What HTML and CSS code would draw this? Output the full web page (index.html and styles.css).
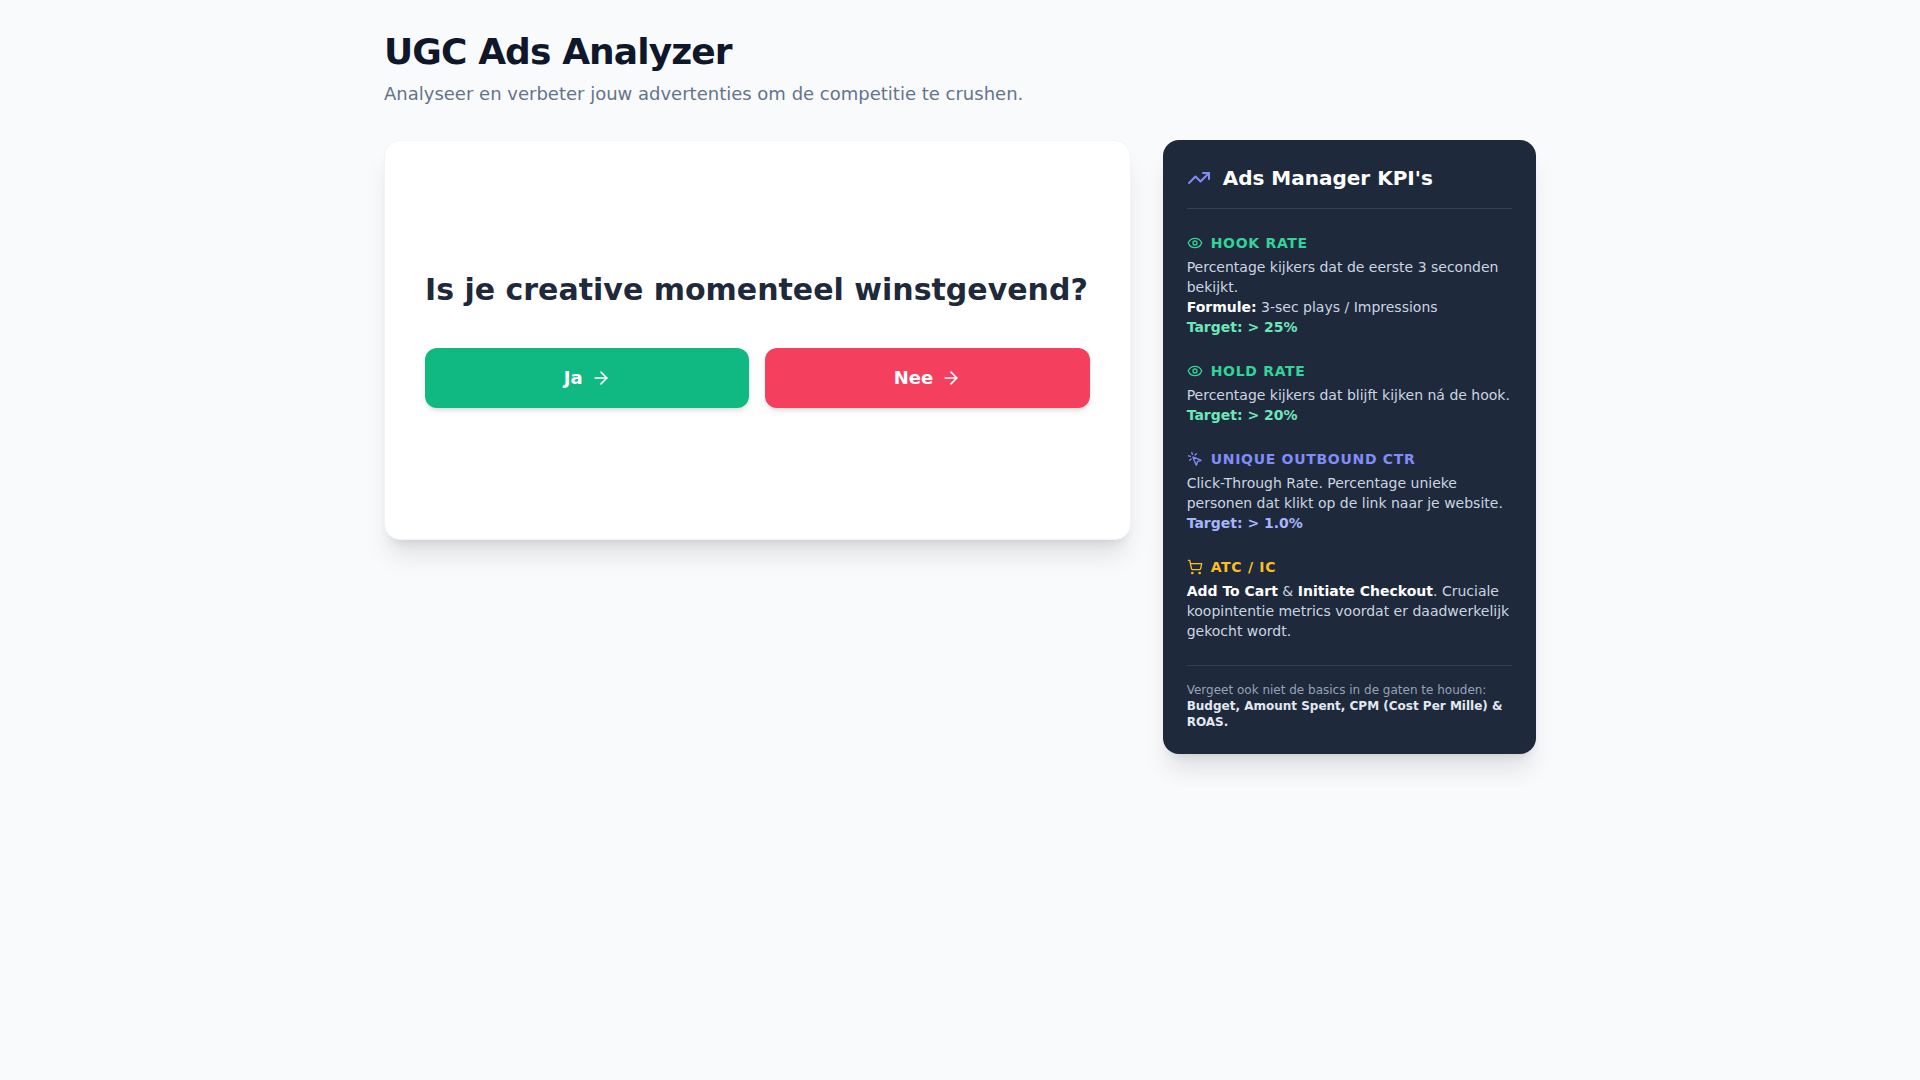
FILE: index.html
```html
<!DOCTYPE html>
<html lang="nl">
<head>
  <meta charset="utf-8">
  <meta name="viewport" content="width=device-width, initial-scale=1">
  <title>UGC Ads Analyzer</title>
  <link rel="stylesheet" href="styles.css">
</head>
<body>
  <div class="page">
    <header class="page-header">
      <h1 class="page-title">UGC Ads Analyzer</h1>
      <p class="page-subtitle">Analyseer en verbeter jouw advertenties om de competitie te crushen.</p>
    </header>

    <div class="layout">
      <main class="question-card">
        <h2 class="question">Is je creative momenteel winstgevend?</h2>
        <div class="answers">
          <button type="button" class="answer answer-yes">
            Ja
            <svg class="icon icon-md" viewBox="0 0 24 24" aria-hidden="true"><path d="M5 12h14"/><path d="m12 5 7 7-7 7"/></svg>
          </button>
          <button type="button" class="answer answer-no">
            Nee
            <svg class="icon icon-md" viewBox="0 0 24 24" aria-hidden="true"><path d="M5 12h14"/><path d="m12 5 7 7-7 7"/></svg>
          </button>
        </div>
      </main>

      <aside class="kpi-card">
        <div class="kpi-header">
          <svg class="icon icon-lg" viewBox="0 0 24 24" aria-hidden="true"><path d="M22 7 13.5 15.5 8.5 10.5 2 17"/><path d="M16 7h6v6"/></svg>
          <h2 class="kpi-title">Ads Manager KPI's</h2>
        </div>

        <div class="kpi-list">
          <section class="kpi kpi-green">
            <h3 class="kpi-name">
              <svg class="icon icon-sm" viewBox="0 0 24 24" aria-hidden="true"><path d="M2.062 12.348a1 1 0 0 1 0-.696 10.75 10.75 0 0 1 19.876 0 1 1 0 0 1 0 .696 10.75 10.75 0 0 1-19.876 0"/><circle cx="12" cy="12" r="3"/></svg>
              Hook Rate
            </h3>
            <p>Percentage kijkers dat de eerste 3 seconden bekijkt.</p>
            <p><strong>Formule:</strong> 3-sec plays / Impressions</p>
            <p class="kpi-target">Target: &gt; 25%</p>
          </section>

          <section class="kpi kpi-green">
            <h3 class="kpi-name">
              <svg class="icon icon-sm" viewBox="0 0 24 24" aria-hidden="true"><path d="M2.062 12.348a1 1 0 0 1 0-.696 10.75 10.75 0 0 1 19.876 0 1 1 0 0 1 0 .696 10.75 10.75 0 0 1-19.876 0"/><circle cx="12" cy="12" r="3"/></svg>
              Hold Rate
            </h3>
            <p>Percentage kijkers dat blijft kijken ná de hook.</p>
            <p class="kpi-target">Target: &gt; 20%</p>
          </section>

          <section class="kpi kpi-indigo">
            <h3 class="kpi-name">
              <svg class="icon icon-sm" viewBox="0 0 24 24" aria-hidden="true"><path d="M14 4.1 12 6"/><path d="m5.1 8-2.9-.8"/><path d="m6 12-1.9 2"/><path d="M7.2 2.2 8 5.1"/><path d="M9.037 9.69a.498.498 0 0 1 .653-.653l11 4.5a.5.5 0 0 1-.074.949l-4.349 1.041a1 1 0 0 0-.74.739l-1.04 4.35a.5.5 0 0 1-.95.074z"/></svg>
              Unique Outbound CTR
            </h3>
            <p>Click-Through Rate. Percentage unieke personen dat klikt op de link naar je website.</p>
            <p class="kpi-target">Target: &gt; 1.0%</p>
          </section>

          <section class="kpi kpi-amber">
            <h3 class="kpi-name">
              <svg class="icon icon-sm" viewBox="0 0 24 24" aria-hidden="true"><circle cx="8" cy="21" r="1"/><circle cx="19" cy="21" r="1"/><path d="M2.05 2.05h2l2.66 12.42a2 2 0 0 0 2 1.58h9.78a2 2 0 0 0 1.95-1.57l1.65-7.43H5.12"/></svg>
              ATC / IC
            </h3>
            <p><strong>Add To Cart</strong> &amp; <strong>Initiate Checkout</strong>. Cruciale koopintentie metrics voordat er daadwerkelijk gekocht wordt.</p>
          </section>
        </div>

        <footer class="kpi-footer">
          <p>Vergeet ook niet de basics in de gaten te houden:</p>
          <p class="kpi-basics">Budget, Amount Spent, CPM (Cost Per Mille) &amp; ROAS.</p>
        </footer>
      </aside>
    </div>
  </div>
</body>
</html>
```
FILE: styles.css
```css
*,
*::before,
*::after {
  box-sizing: border-box;
}

body {
  margin: 0;
  padding: 32px;
  background: #f8fafc;
  color: #1e293b;
  font-family: "DejaVu Sans", sans-serif;
  font-size: 16px;
  line-height: 24px;
}

h1,
h2,
h3,
p {
  margin: 0;
}

.page {
  max-width: 1152px;
  margin: 0 auto;
}

.page-header {
  margin-bottom: 32px;
}

.page-title {
  color: #0f172a;
  font-size: 36px;
  font-weight: 800;
  line-height: 40px;
  letter-spacing: -0.025em;
}

.page-subtitle {
  margin-top: 8px;
  color: #64748b;
  font-size: 18px;
  line-height: 28px;
}

.layout {
  display: grid;
  grid-template-columns: minmax(0, 2fr) minmax(0, 1fr);
  gap: 32px;
  align-items: start;
}

.question-card,
.kpi-card {
  border-radius: 16px;
  box-shadow: 0 20px 25px -5px rgb(0 0 0 / 0.1), 0 8px 10px -6px rgb(0 0 0 / 0.1);
}

.question-card {
  display: flex;
  flex-direction: column;
  justify-content: center;
  gap: 40px;
  min-height: 400px;
  padding: 40px;
  border: 1px solid #f1f5f9;
  background: #ffffff;
}

.question {
  font-size: 30px;
  font-weight: 700;
  line-height: 36px;
}

.answers {
  display: grid;
  grid-template-columns: 1fr 1fr;
  gap: 16px;
}

.answer {
  display: flex;
  align-items: center;
  justify-content: center;
  gap: 8px;
  padding: 16px 24px;
  border: 0;
  border-radius: 12px;
  box-shadow: 0 4px 6px -1px rgb(0 0 0 / 0.1), 0 2px 4px -2px rgb(0 0 0 / 0.1);
  color: #ffffff;
  font-family: inherit;
  font-size: 18px;
  font-weight: 700;
  line-height: 28px;
  cursor: pointer;
}

.answer-yes {
  background: #10b981;
}

.answer-no {
  background: #f43f5e;
}

.icon {
  flex: none;
  fill: none;
  stroke: currentColor;
  stroke-width: 2;
  stroke-linecap: round;
  stroke-linejoin: round;
}

.icon-sm {
  width: 16px;
  height: 16px;
}

.icon-md {
  width: 20px;
  height: 20px;
}

.icon-lg {
  width: 24px;
  height: 24px;
}

.kpi-card {
  padding: 24px;
  background: #1e293b;
  color: #cbd5e1;
  font-size: 14px;
  line-height: 20px;
}

.kpi-header {
  display: flex;
  align-items: center;
  gap: 12px;
  padding-bottom: 16px;
  border-bottom: 1px solid #334155;
  color: #818cf8;
}

.kpi-title {
  color: #ffffff;
  font-size: 20px;
  font-weight: 700;
  line-height: 28px;
}

.kpi-list {
  display: flex;
  flex-direction: column;
  gap: 24px;
  padding: 24px 0;
}

.kpi-name {
  display: flex;
  align-items: center;
  gap: 8px;
  margin-bottom: 4px;
  font-size: 14px;
  font-weight: 700;
  line-height: 20px;
  letter-spacing: 0.05em;
  text-transform: uppercase;
}

.kpi strong {
  color: #ffffff;
}

.kpi-target {
  font-weight: 700;
}

.kpi-green .kpi-name {
  color: #34d399;
}

.kpi-green .kpi-target {
  color: #6ee7b7;
}

.kpi-indigo .kpi-name {
  color: #818cf8;
}

.kpi-indigo .kpi-target {
  color: #a5b4fc;
}

.kpi-amber .kpi-name {
  color: #fbbf24;
}

.kpi-footer {
  padding-top: 16px;
  border-top: 1px solid #334155;
  color: #94a3b8;
  font-size: 12px;
  line-height: 16px;
}

.kpi-basics {
  color: #e2e8f0;
  font-weight: 700;
}

@media (max-width: 900px) {
  .layout {
    grid-template-columns: minmax(0, 1fr);
  }
}
```
